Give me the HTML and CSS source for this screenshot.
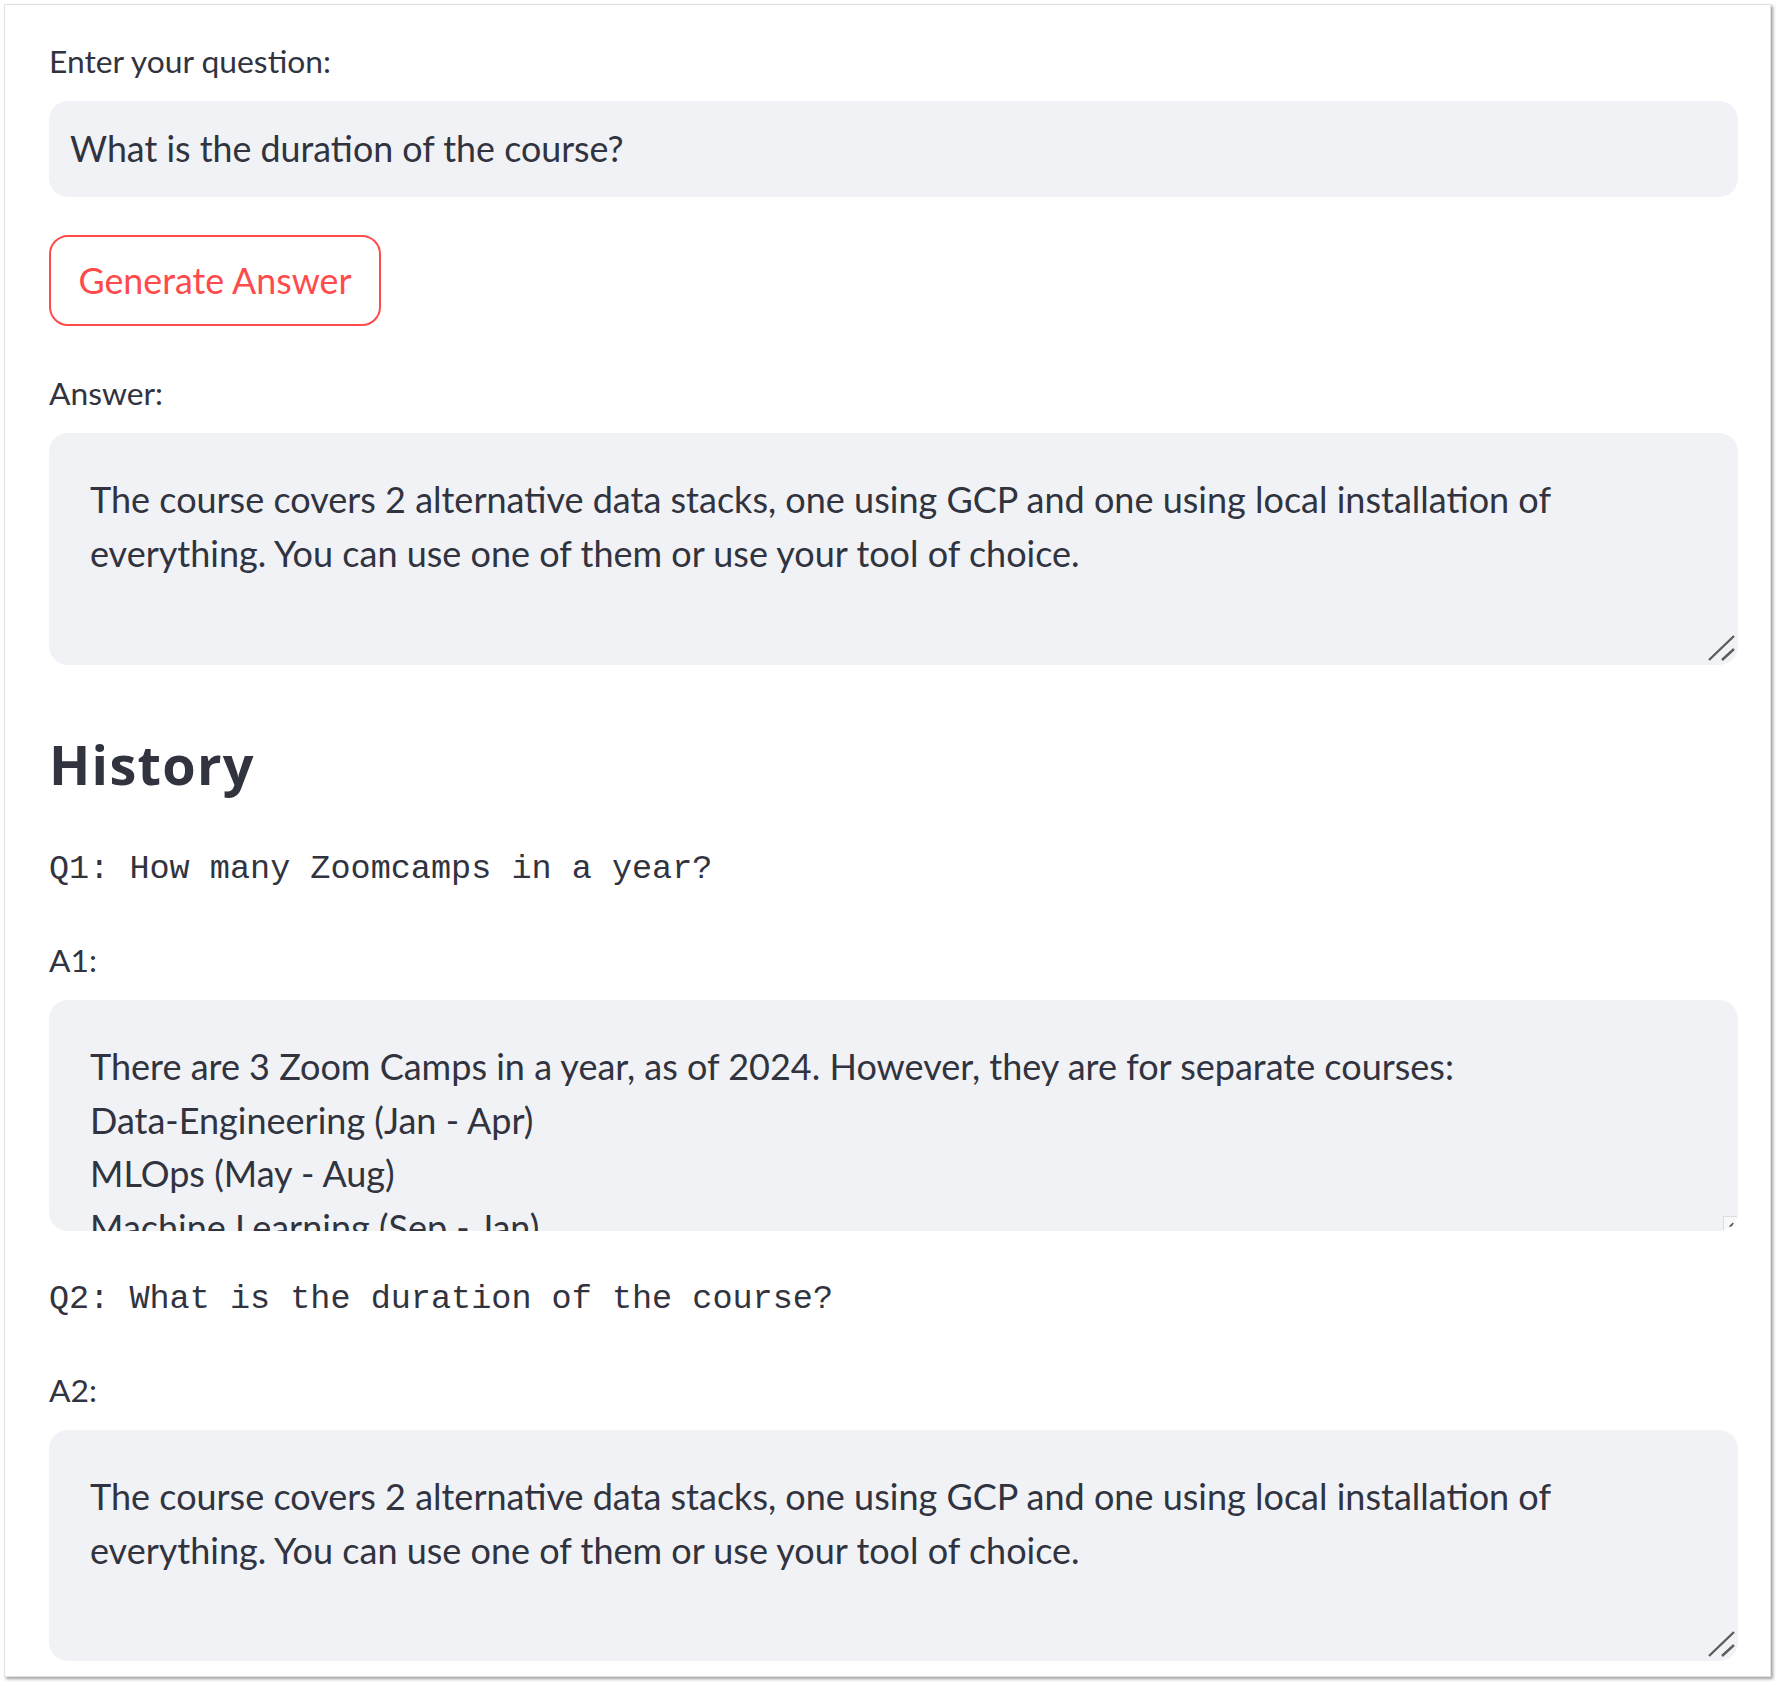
FILE: index.html
```html
<!DOCTYPE html>
<html lang="en">
<head>
<meta charset="utf-8">
<title>Course Q&amp;A</title>
<link rel="stylesheet" href="styles.css">
</head>
<body>
<main class="card">
  <label class="label label-first">Enter your question:</label>
  <div class="input">What is the duration of the course?</div>
  <button class="btn" type="button">Generate Answer</button>

  <label class="label label-answer">Answer:</label>
  <div class="area area-main">
    <div class="area-text">The course covers 2 alternative data stacks, one using GCP and one using local installation of everything. You can use one of them or use your tool of choice.</div>
    <svg class="grip" width="32" height="32" viewBox="0 0 32 32"><path d="M4 27 L29 3 M17 27 L29 16" stroke="#5c5c5c" stroke-width="2.4" fill="none"/></svg>
  </div>

  <h2 class="heading">History</h2>

  <div class="mono q1">Q1: How many Zoomcamps in a year?</div>
  <label class="label label-a">A1:</label>
  <div class="area">
    <div class="area-text">There are 3 Zoom Camps in a year, as of 2024. However, they are for separate courses:
Data-Engineering (Jan - Apr)
MLOps (May - Aug)
Machine Learning (Sep - Jan)</div>
    <span class="corner"><svg width="14" height="14" viewBox="0 0 14 14"><path d="M6 10 L10 6 M8 10 L10 8" stroke="#555" stroke-width="1.6" fill="none"/></svg></span>
  </div>

  <div class="mono q2">Q2: What is the duration of the course?</div>
  <label class="label label-a">A2:</label>
  <div class="area">
    <div class="area-text">The course covers 2 alternative data stacks, one using GCP and one using local installation of everything. You can use one of them or use your tool of choice.</div>
    <svg class="grip" width="32" height="32" viewBox="0 0 32 32"><path d="M4 27 L29 3 M17 27 L29 16" stroke="#5c5c5c" stroke-width="2.4" fill="none"/></svg>
  </div>
</main>
</body>
</html>
```
FILE: styles.css
```css
* { box-sizing: border-box; }

html, body {
  margin: 0;
  background: #ffffff;
}

body {
  padding: 4px 9px 9px 4px;
  font-family: Lato, "Liberation Sans", sans-serif;
  color: #31333f;
}

.card {
  display: flex;
  flex-direction: column;
  align-items: stretch;
  background: #ffffff;
  border: 1px solid #e2e2e2;
  box-shadow: 2px 2px 3px rgba(0, 0, 0, 0.38);
  padding: 37px 32px 15px 44px;
}

.label {
  display: block;
  font-size: 31.8px;
  line-height: 38px;
  color: #31333f;
}

.label-answer { margin-top: 48px; }
.label-a { margin-top: 52px; }

.input {
  margin-top: 21px;
  height: 96px;
  line-height: 96px;
  padding: 0 22px 0 21px;
  background: #f0f2f6;
  border-radius: 19px;
  font-size: 35.8px;
  white-space: nowrap;
}

.btn {
  align-self: flex-start;
  margin-top: 38px;
  width: 332px;
  height: 91px;
  padding: 0;
  background: #ffffff;
  border: 2px solid #ff4b4b;
  border-radius: 19px;
  color: #ff4b4b;
  font-family: Lato, "Liberation Sans", sans-serif;
  font-size: 35.8px;
  line-height: 43px;
  cursor: pointer;
}

.area {
  position: relative;
  margin-top: 21px;
  height: 231px;
  background: #f0f2f6;
  border-radius: 19px;
  overflow: hidden;
}

.area-main { height: 232px; }

.area-text {
  padding: 40px 42px 0 41px;
  font-size: 36px;
  line-height: 53.5px;
  white-space: pre-line;
}

.grip {
  position: absolute;
  right: 1px;
  bottom: 0;
  display: block;
}

.corner {
  position: absolute;
  right: 1px;
  bottom: 0;
  width: 14px;
  height: 15px;
  background: #f7f8fa;
  border-top: 1px solid #dcdde0;
  border-left: 1px solid #dcdde0;
  display: flex;
}

.heading {
  margin: 67px 0 0 0;
  font-family: "Open Sans", Lato, sans-serif;
  font-weight: 700;
  font-size: 54px;
  line-height: 65px;
  letter-spacing: 1.3px;
  color: #31333f;
}

.mono {
  font-family: "Liberation Mono", "DejaVu Sans Mono", monospace;
  font-size: 33.5px;
  line-height: 40px;
  white-space: pre;
  color: #31333f;
}

.q1 { margin-top: 52px; }
.q2 { margin-top: 48px; }
```
